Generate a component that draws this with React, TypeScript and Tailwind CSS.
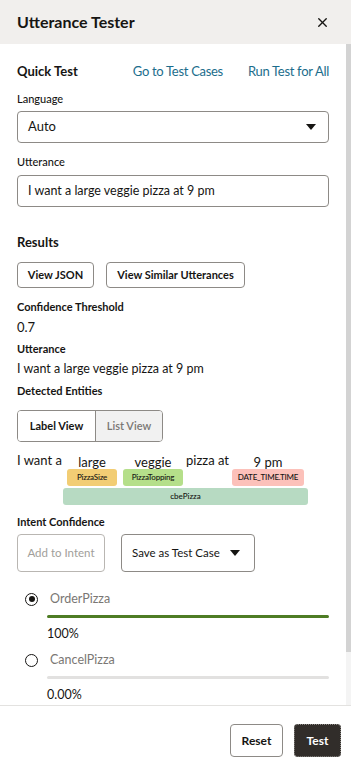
import { X } from 'lucide-react';

const FONT = { fontFamily: 'Lato, "Noto Sans", Arial, sans-serif' };

function Caret() {
  return (
    <svg width="10" height="6" viewBox="0 0 10 6" className="shrink-0">
      <path d="M0 0 L10 0 L5 6 Z" fill="#161513" />
    </svg>
  );
}

function Radio({ checked }: { checked: boolean }) {
  return (
    <span className="w-[13px] h-[13px] rounded-full border-[1.5px] border-[#161513] flex items-center justify-center shrink-0">
      {checked && <span className="w-[6px] h-[6px] rounded-full bg-[#161513]" />}
    </span>
  );
}

function EntityToken({ word, label, width, color }: { word: string; label: string; width: string; color: string }) {
  return (
    <div className={`flex flex-col items-stretch pt-[5px] ${width}`}>
      <div className="h-[13px] leading-[13px] text-[13px] text-center text-[#161513]">{word}</div>
      <div className={`h-[17px] leading-[17px] text-[8px] font-medium tracking-[-0.2px] text-center rounded-[3px] text-[#161513] whitespace-nowrap ${color}`}>{label}</div>
    </div>
  );
}

const INTENTS = [
  { name: 'OrderPizza', value: 100, label: '100%', checked: true },
  { name: 'CancelPizza', value: 0, label: '0.00%', checked: false },
];

export default function App() {
  return (
    <div className="w-[351px] h-[762px] flex flex-col bg-white text-[#161513] overflow-hidden" style={FONT}>
      <div className="h-[44px] shrink-0 bg-[#f1efed] flex items-center justify-between pl-[17px] pr-[21px]">
        <span className="text-[16px] font-bold">Utterance Tester</span>
        <X size={15} strokeWidth={2.2} />
      </div>

      <div className="flex-1 flex min-h-0">
        <div className="flex-1 min-w-0 overflow-hidden pl-[17px] pr-[17px] pt-[18px]">
          <div className="h-[20px] flex items-center justify-between">
            <span className="text-[13px] font-bold">Quick Test</span>
            <div className="flex gap-[25px] text-[13px] tracking-[-0.3px] text-[#1b6d8c]">
              <span>Go to Test Cases</span>
              <span>Run Test for All</span>
            </div>
          </div>

          <div className="mt-[9px] h-[16px] leading-[16px] text-[11px] font-medium">Language</div>
          <div className="mt-[4px] h-[32px] border border-[#8d8a86] rounded-[4px] flex items-center justify-between pl-[10px] pr-[12px] text-[13px]">
            <span>Auto</span>
            <Caret />
          </div>

          <div className="mt-[11px] h-[16px] leading-[16px] text-[11px] font-medium">Utterance</div>
          <div className="mt-[5px] h-[32px] border border-[#8d8a86] rounded-[4px] flex items-center pl-[10px] text-[12.5px]">
            I want a large veggie pizza at 9 pm
          </div>

          <div className="mt-[25px] h-[20px] leading-[20px] text-[13px] font-bold">Results</div>
          <div className="mt-[10px] flex gap-[12px]">
            <button className="h-[26px] w-[77px] border border-[#8d8a86] rounded-[4px] text-[11px] font-bold">View JSON</button>
            <button className="h-[26px] w-[139px] border border-[#8d8a86] rounded-[4px] text-[11px] font-bold">View Similar Utterances</button>
          </div>

          <div className="mt-[11px] h-[16px] leading-[16px] text-[11px] font-bold">Confidence Threshold</div>
          <div className="mt-[2px] h-[20px] leading-[20px] text-[13px]">0.7</div>
          <div className="mt-[4px] h-[16px] leading-[16px] text-[11px] font-bold">Utterance</div>
          <div className="mt-[2px] h-[20px] leading-[20px] text-[12.5px]">I want a large veggie pizza at 9 pm</div>
          <div className="mt-[4px] h-[16px] leading-[16px] text-[11px] font-bold">Detected Entities</div>

          <div className="mt-[11px] h-[32px] w-[146px] flex border border-[#8d8a86] rounded-[4px] overflow-hidden text-[11px] font-bold">
            <div className="w-[77px] flex items-center justify-center bg-white">Label View</div>
            <div className="flex-1 flex items-center justify-center bg-[#f1f1f1] text-[#7a7774] font-semibold border-l border-[#8d8a86]">List View</div>
          </div>

          <div className="mt-[9px] flex items-start">
            <span className="h-[18px] leading-[18px] text-[13px] w-[46px] shrink-0 whitespace-nowrap">I want a</span>
            <div className="flex flex-col">
              <div className="flex items-start px-[4px]">
                <EntityToken word="large" label="PizzaSize" width="w-[50px]" color="bg-[#f2cd74]" />
                <div className="w-[6px]" />
                <EntityToken word="veggie" label="PizzaTopping" width="w-[60px]" color="bg-[#b5df8a]" />
                <span className="h-[18px] leading-[18px] text-[13px] w-[49px] text-center whitespace-nowrap">pizza at</span>
                <EntityToken word="9 pm" label="DATE_TIME.TIME" width="w-[72px]" color="bg-[#fcc1ba]" />
              </div>
              <div className="mt-[2px] w-[245px] h-[17px] leading-[17px] text-[8px] font-medium text-center rounded-[3px] bg-[#b7dac2]">cbePizza</div>
            </div>
          </div>

          <div className="mt-[9px] h-[16px] leading-[16px] text-[11px] font-bold">Intent Confidence</div>
          <div className="mt-[4px] flex gap-[16px]">
            <button className="h-[38px] w-[88px] border border-[#b9b6b2] rounded-[4px] text-[11.5px] text-[#a19e9a]">Add to Intent</button>
            <button className="h-[38px] w-[134px] border border-[#8d8a86] rounded-[4px] flex items-center justify-between pl-[10px] pr-[14px] text-[11.5px]">
              <span>Save as Test Case</span>
              <Caret />
            </button>
          </div>

          <div className="mt-[17px]">
            {INTENTS.map((intent, i) => (
              <div key={intent.name} className={i > 0 ? 'mt-[6px]' : ''}>
                <div className="h-[20px] flex items-center pl-[8px] gap-[12px]">
                  <Radio checked={intent.checked} />
                  <span className="text-[12.5px] text-[#7a7774]">{intent.name}</span>
                </div>
                <div className="mt-[6px] ml-[30px] h-[3px] rounded-full bg-[#e2e1e0] overflow-hidden">
                  <div className="h-full bg-[#4e7c24]" style={{ width: `${intent.value}%` }} />
                </div>
                <div className="mt-[6px] ml-[30px] h-[20px] leading-[20px] text-[12.5px]">{intent.label}</div>
              </div>
            ))}
          </div>
        </div>

        <div className="w-[5px] shrink-0 flex flex-col bg-[#f4f4f4]">
          <div className="h-[608px] bg-[#d3d3d3]" />
        </div>
      </div>

      <div className="h-[57px] shrink-0 border-t border-[#e3e2e0] flex items-start justify-end gap-[11px] pt-[18px] pr-[10px]">
        <button className="h-[33px] w-[53px] border border-[#8d8a86] rounded-[4px] text-[12px] font-bold">Reset</button>
        <button className="h-[33px] w-[47px] rounded-[4px] bg-[#312d2a] text-white text-[12px] font-bold outline outline-1 outline-dotted outline-[#8d8a86] outline-offset-[-1px]">Test</button>
      </div>
    </div>
  );
}
